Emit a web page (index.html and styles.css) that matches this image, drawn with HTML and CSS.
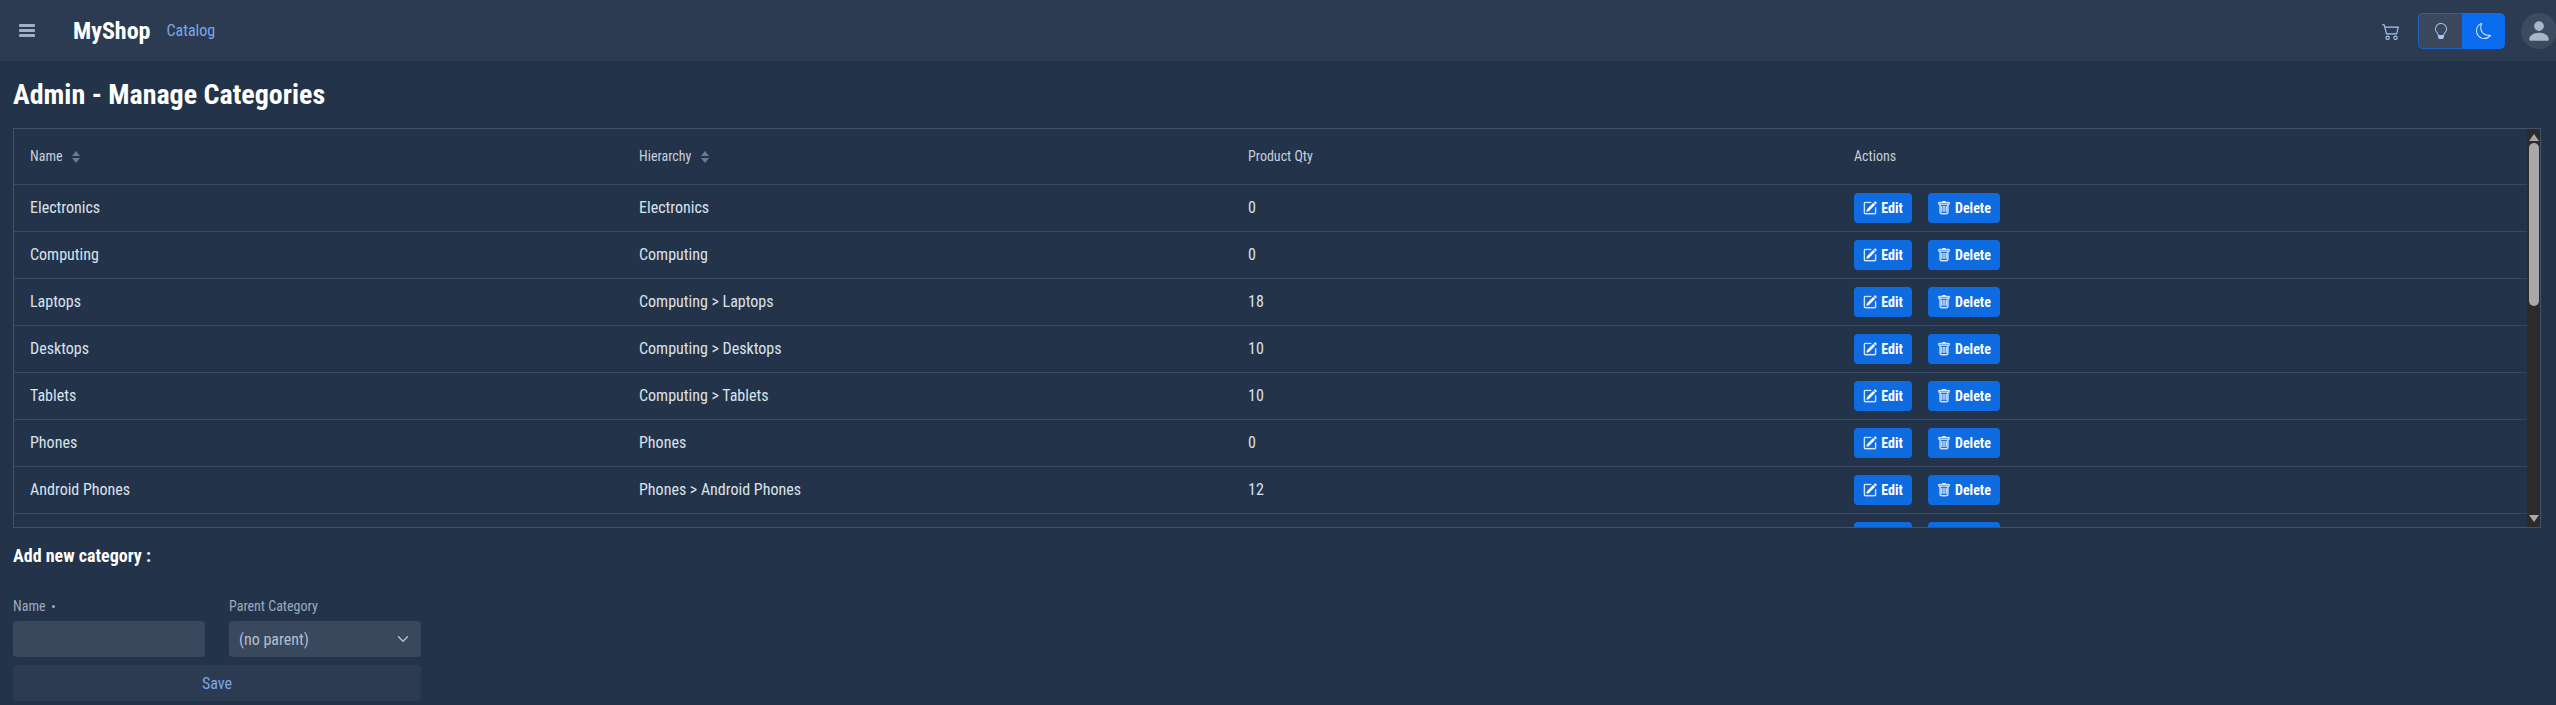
FILE: index.html
```html
<!DOCTYPE html>
<html lang="en">
<head>
<meta charset="utf-8">
<title>MyShop - Manage Categories</title>
<link rel="stylesheet" href="styles.css">
</head>
<body>
<svg class="sprite" width="0" height="0" aria-hidden="true">
  <symbol id="i-edit" viewBox="0 0 16 16"><path d="M15.502 1.94a.5.5 0 0 1 0 .706L14.459 3.69l-2-2L13.502.646a.5.5 0 0 1 .707 0l1.293 1.293zm-1.75 2.456-2-2L4.939 9.21a.5.5 0 0 0-.121.196l-.805 2.414a.25.25 0 0 0 .316.316l2.414-.805a.5.5 0 0 0 .196-.12l6.813-6.814z"/><path fill-rule="evenodd" d="M1 13.5A1.5 1.5 0 0 0 2.5 15h11a1.5 1.5 0 0 0 1.5-1.5v-6a.5.5 0 0 0-1 0v6a.5.5 0 0 1-.5.5h-11a.5.5 0 0 1-.5-.5v-11a.5.5 0 0 1 .5-.5H9a.5.5 0 0 0 0-1H2.5A1.5 1.5 0 0 0 1 2.5v11z"/></symbol>
  <symbol id="i-trash" viewBox="0 0 16 16"><path d="M5.5 5.5A.5.5 0 0 1 6 6v6a.5.5 0 0 1-1 0V6a.5.5 0 0 1 .5-.5zm2.5 0a.5.5 0 0 1 .5.5v6a.5.5 0 0 1-1 0V6a.5.5 0 0 1 .5-.5zm3 .5a.5.5 0 0 0-1 0v6a.5.5 0 0 0 1 0V6z"/><path fill-rule="evenodd" d="M14.5 3a1 1 0 0 1-1 1H13v9a2 2 0 0 1-2 2H5a2 2 0 0 1-2-2V4h-.5a1 1 0 0 1-1-1V2a1 1 0 0 1 1-1H6a1 1 0 0 1 1-1h2a1 1 0 0 1 1 1h3.5a1 1 0 0 1 1 1v1zM4.118 4 4 4.059V13a1 1 0 0 0 1 1h6a1 1 0 0 0 1-1V4.059L11.882 4H4.118zM2.5 3V2h11v1h-11z"/></symbol>
  <symbol id="i-sort" viewBox="0 0 8 12"><path d="M4 0 8 5H0zM4 12 0 7h8z"/></symbol>
</svg>

<header class="topbar">
  <button class="menu-btn" aria-label="Menu"><span></span><span></span><span></span></button>
  <a class="brand">MyShop</a>
  <a class="nav-link">Catalog</a>
  <div class="topbar-right">
    <svg class="cart" viewBox="0 0 16 16" fill="currentColor"><path d="M0 2.5A.5.5 0 0 1 .5 2H2a.5.5 0 0 1 .485.379L2.89 4H14.5a.5.5 0 0 1 .485.621l-1.5 6A.5.5 0 0 1 13 11H4a.5.5 0 0 1-.485-.379L1.61 3H.5a.5.5 0 0 1-.5-.5zM3.14 5l1.25 5h8.22l1.25-5H3.14zM5 13a1 1 0 1 0 0 2 1 1 0 0 0 0-2zm-2 1a2 2 0 1 1 4 0 2 2 0 0 1-4 0zm9-1a1 1 0 1 0 0 2 1 1 0 0 0 0-2zm-2 1a2 2 0 1 1 4 0 2 2 0 0 1-4 0z"/></svg>
    <div class="theme-toggle">
      <button class="theme-btn light" aria-label="Light"><svg viewBox="0 0 16 16" fill="currentColor"><path d="M2 6a6 6 0 1 1 10.174 4.31c-.203.196-.359.4-.453.619l-.762 1.769A.5.5 0 0 1 10.5 13a.5.5 0 0 1 0 1 .5.5 0 0 1 0 1l-.224.447a1 1 0 0 1-.894.553H6.618a1 1 0 0 1-.894-.553L5.5 15a.5.5 0 0 1 0-1 .5.5 0 0 1 0-1 .5.5 0 0 1-.46-.302l-.761-1.77a1.964 1.964 0 0 0-.453-.618A5.984 5.984 0 0 1 2 6zm6-5a5 5 0 0 0-3.479 8.592c.263.254.514.564.676.941L5.83 12h4.342l.632-1.467c.162-.377.413-.687.676-.941A5 5 0 0 0 8 1z"/></svg></button>
      <button class="theme-btn dark" aria-label="Dark"><svg viewBox="0 0 16 16" fill="currentColor"><path d="M6 .278a.768.768 0 0 1 .08.858 7.208 7.208 0 0 0-.878 3.46c0 4.021 3.278 7.277 7.318 7.277.527 0 1.04-.055 1.533-.16a.787.787 0 0 1 .81.316.733.733 0 0 1-.031.893A8.349 8.349 0 0 1 8.344 16C3.734 16 0 12.286 0 7.71 0 4.266 2.114 1.312 5.124.06A.752.752 0 0 1 6 .278zM4.858 1.311A7.269 7.269 0 0 0 1.025 7.71c0 4.02 3.279 7.276 7.319 7.276a7.316 7.316 0 0 0 5.205-2.162c-.337.042-.68.063-1.029.063-4.61 0-8.343-3.714-8.343-8.29 0-1.167.242-2.278.681-3.286z"/></svg></button>
    </div>
    <div class="avatar"><svg viewBox="0 0 16 16" fill="currentColor"><path d="M3 14s-1 0-1-1 1-4 6-4 6 3 6 4-1 1-1 1H3zm5-6a3 3 0 1 0 0-6 3 3 0 0 0 0 6z"/></svg></div>
  </div>
</header>

<main class="page">
  <h1 class="page-title">Admin - Manage Categories</h1>
  <div class="table-wrap">
    <table class="cat-table">
      <colgroup><col class="col-a"><col class="col-a"><col class="col-b"><col></colgroup>
      <thead>
        <tr>
          <th>Name <svg class="sort"><use href="#i-sort"/></svg></th>
          <th>Hierarchy <svg class="sort"><use href="#i-sort"/></svg></th>
          <th>Product Qty</th>
          <th>Actions</th>
        </tr>
      </thead>
      <tbody>
        <tr><td>Electronics</td><td>Electronics</td><td>0</td><td class="actions"><button class="act"><svg><use href="#i-edit"/></svg>Edit</button><button class="act"><svg><use href="#i-trash"/></svg>Delete</button></td></tr>
        <tr><td>Computing</td><td>Computing</td><td>0</td><td class="actions"><button class="act"><svg><use href="#i-edit"/></svg>Edit</button><button class="act"><svg><use href="#i-trash"/></svg>Delete</button></td></tr>
        <tr><td>Laptops</td><td>Computing &gt; Laptops</td><td>18</td><td class="actions"><button class="act"><svg><use href="#i-edit"/></svg>Edit</button><button class="act"><svg><use href="#i-trash"/></svg>Delete</button></td></tr>
        <tr><td>Desktops</td><td>Computing &gt; Desktops</td><td>10</td><td class="actions"><button class="act"><svg><use href="#i-edit"/></svg>Edit</button><button class="act"><svg><use href="#i-trash"/></svg>Delete</button></td></tr>
        <tr><td>Tablets</td><td>Computing &gt; Tablets</td><td>10</td><td class="actions"><button class="act"><svg><use href="#i-edit"/></svg>Edit</button><button class="act"><svg><use href="#i-trash"/></svg>Delete</button></td></tr>
        <tr><td>Phones</td><td>Phones</td><td>0</td><td class="actions"><button class="act"><svg><use href="#i-edit"/></svg>Edit</button><button class="act"><svg><use href="#i-trash"/></svg>Delete</button></td></tr>
        <tr><td>Android Phones</td><td>Phones &gt; Android Phones</td><td>12</td><td class="actions"><button class="act"><svg><use href="#i-edit"/></svg>Edit</button><button class="act"><svg><use href="#i-trash"/></svg>Delete</button></td></tr>
        <tr><td></td><td></td><td></td><td class="actions"><button class="act"></button><button class="act delete-blank"></button></td></tr>
      </tbody>
    </table>
    <div class="scrollbar" aria-hidden="true">
      <span class="arrow up"></span>
      <span class="thumb"></span>
      <span class="arrow down"></span>
    </div>
  </div>
  <h2 class="section-title">Add new category :</h2>
  <form class="cat-form">
    <label class="field"><span class="field-label">Name <i class="req"></i></span><input class="control" type="text"></label>
    <label class="field"><span class="field-label">Parent Category</span>
      <span class="control select"><span>(no parent)</span><svg viewBox="0 0 16 16" fill="none" stroke="currentColor" stroke-width="2" stroke-linecap="round" stroke-linejoin="round"><path d="m2 5 6 6 6-6"/></svg></span>
    </label>
    <button class="save" type="button">Save</button>
  </form>
</main>
</body>
</html>
```

FILE: styles.css
```css
* { box-sizing: border-box; }
html, body { height: 100%; }
body {
  margin: 0;
  overflow: hidden;
  background: #233349;
  color: #e2e8f0;
  font-family: Roboto, "Liberation Sans", sans-serif;
  font-stretch: 87%;
  font-size: 14px;
}
button { font-family: inherit; font-stretch: inherit; border: 0; cursor: pointer; }
.sprite { position: absolute; }

.topbar {
  display: flex;
  align-items: center;
  height: 61px;
  padding-left: 19px;
  background: #2c3b51;
}
.menu-btn {
  display: flex;
  flex-direction: column;
  gap: 2.5px;
  width: 16px;
  padding: 0;
  background: none;
}
.menu-btn span { display: block; height: 2.6px; background: #a3afc0; border-radius: 1px; }
.brand { margin-left: 38px; font-size: 24px; font-weight: 700; color: #fff; }
.nav-link { margin-left: 16px; font-size: 16px; color: #7ba7ea; }
.topbar-right { display: flex; align-items: center; margin-left: auto; margin-right: -1px; }
.cart { width: 18px; height: 18px; color: #a9c6f2; }
.theme-toggle { display: flex; height: 36px; margin-left: 18px; }
.theme-btn { display: flex; align-items: center; justify-content: center; padding: 0; width: 44px; }
.theme-btn.light { background: #3a475c; border: 1px solid #1c62c0; border-right: 0; border-radius: 5px 0 0 5px; color: #a9c6f2; }
.theme-btn.dark { background: #0c6cf0; border-radius: 0 5px 5px 0; color: #dbe8fb; width: 43px; }
.theme-btn svg { width: 16px; height: 16px; }
.avatar { display: flex; align-items: center; justify-content: center; width: 36px; height: 36px; margin-left: 16px; border-radius: 50%; background: #3d4a60; color: #a9b6c8; }
.avatar svg { width: 26px; height: 26px; }

.page { padding: 0 13px; }
.page-title { margin: 17px 0 0; height: 50px; font-size: 28px; line-height: 34px; font-weight: 700; color: #fff; }

.table-wrap {
  position: relative;
  height: 400px;
  width: 2528px;
  overflow: hidden;
  border: 1px solid #44526a;
}
.scrollbar {
  position: absolute;
  top: 0;
  right: 0;
  bottom: 0;
  display: flex;
  flex-direction: column;
  align-items: center;
  width: 13px;
  background: #2b2b2b;
}
.thumb { width: 10px; height: 163px; margin-top: 2px; background: #a8a8a8; border-radius: 5px; }
.arrow { width: 0; height: 0; border-left: 5px solid transparent; border-right: 5px solid transparent; }
.arrow.up { margin-top: 5px; border-bottom: 7px solid #a8a8a8; }
.arrow.down { margin-top: auto; margin-bottom: 5px; border-top: 7px solid #a8a8a8; }

.cat-table { width: 2514px; border-collapse: collapse; table-layout: fixed; }
.col-a { width: 609px; }
.col-b { width: 606px; }
.cat-table th { height: 55px; padding: 0 16px; text-align: left; font-size: 14px; font-weight: 400; color: #c6cfdb; }
.cat-table td { height: 47px; padding: 0 16px; color: #dbe2ec; font-size: 16px; }
.cat-table tr { border-bottom: 1px solid #3a4860; }
.sort { width: 8px; height: 12px; margin-left: 6px; vertical-align: -2px; fill: #6c7a90; }

.act {
  display: inline-flex;
  align-items: center;
  justify-content: center;
  height: 30px;
  min-width: 58px;
  padding: 0 9px;
  margin-right: 16px;
  gap: 4px;
  vertical-align: middle;
  background: #0e6be0;
  color: #fff;
  font-size: 14px;
  font-weight: 700;
  border-radius: 4px;
}
.act svg { width: 14px; height: 14px; fill: currentColor; stroke: currentColor; stroke-width: .3px; }
.delete-blank { width: 72px; }

.section-title { margin: 17px 0 0; font-size: 18px; line-height: 22px; font-weight: 700; color: #fff; }
.cat-form { display: grid; grid-template-columns: 192px 192px; column-gap: 24px; row-gap: 8px; width: 408px; margin-top: 31px; }
.field { display: flex; flex-direction: column; gap: 7px; }
.field-label { font-size: 14px; line-height: 16px; color: #9dabbf; }
.req { display: inline-block; width: 3px; height: 3px; margin-left: 3px; vertical-align: 3px; border-radius: 50%; background: #9dabbf; }
.control { display: block; width: 100%; height: 36px; border: 0; border-radius: 4px; background: #3a485e; color: #b3bfcf; font: inherit; }
.select { display: flex; align-items: center; justify-content: space-between; padding: 0 12px 0 10px; font-size: 16px; font-stretch: 87%; }
.select svg { width: 12px; height: 12px; }
.save { grid-column: 1 / -1; height: 36px; border-radius: 4px; background: #2c3b51; color: #7ba7ea; font-size: 16px; }
```
